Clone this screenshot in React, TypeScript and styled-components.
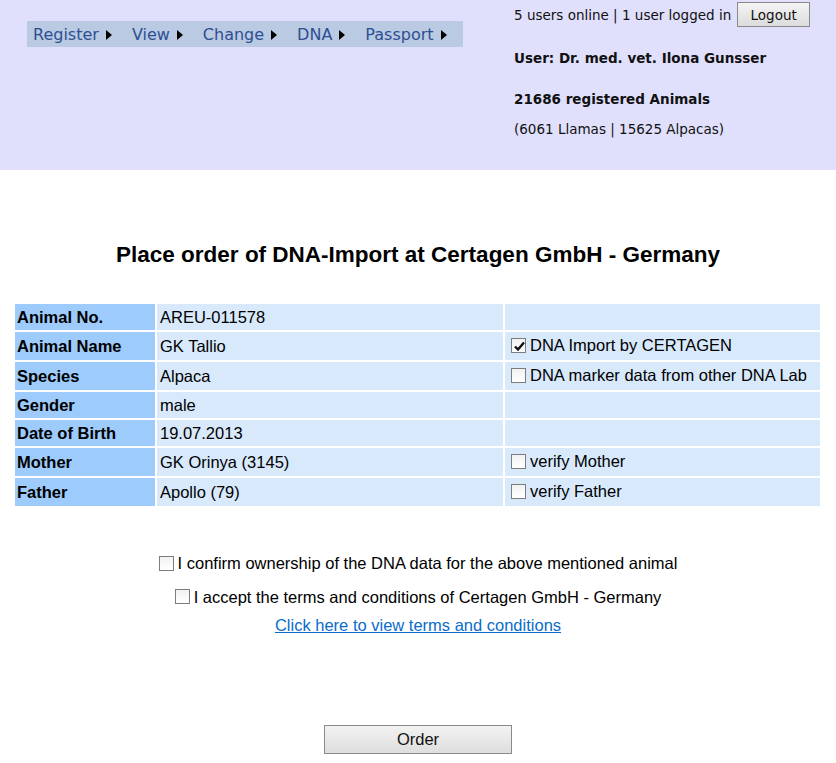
import React from "react";
import styled, { createGlobalStyle } from "styled-components";

const Global = createGlobalStyle`
  html, body { margin: 0; padding: 0; background: #ffffff; }
  body { font-family: "Liberation Sans", Arial, sans-serif; color: #000; }
`;

const Header = styled.header`
  background: #e0e0fc;
  height: 170px;
  display: flex;
  align-items: flex-start;
`;

const NavArea = styled.div`
  width: 514px;
  padding: 21px 0 0 27px;
  box-sizing: border-box;
`;

const Nav = styled.nav`
  display: flex;
  align-items: center;
  width: 436px;
  height: 26px;
  background: #b9cae2;
  box-sizing: border-box;
  padding: 1px 0 0 6px;
  gap: 20px;
`;

const NavItem = styled.a`
  font-family: "DejaVu Sans", Verdana, sans-serif;
  font-size: 16px;
  color: #2e4f92;
  text-decoration: none;
  display: flex;
  align-items: center;
  gap: 7px;
  white-space: nowrap;
`;

const Arrow = styled.span`
  display: inline-block;
  width: 0;
  height: 0;
  border-top: 5px solid transparent;
  border-bottom: 5px solid transparent;
  border-left: 6px solid #000;
`;

const Info = styled.div`
  font-family: "DejaVu Sans", Verdana, sans-serif;
  font-size: 13.5px;
  color: #111;
  display: flex;
  flex-direction: column;
  padding-top: 2px;
`;

const OnlineRow = styled.div`
  display: flex;
  align-items: center;
  gap: 6px;
`;

const LogoutButton = styled.button`
  font-family: "DejaVu Sans", Verdana, sans-serif;
  font-size: 13.5px;
  color: #111;
  width: 73px;
  height: 25px;
  border: 1px solid #8a8a8a;
  background: linear-gradient(#f4f4f4, #dcdcdc);
  padding: 0;
`;

const InfoLine = styled.div<{ $bold?: boolean; $top: number }>`
  font-weight: ${(p) => (p.$bold ? "bold" : "normal")};
  margin-top: ${(p) => p.$top}px;
  line-height: 16px;
`;

const Title = styled.h1`
  font-family: "Liberation Sans", Arial, sans-serif;
  font-size: 22.5px;
  font-weight: bold;
  text-align: center;
  margin: 72px 0 0 0;
  line-height: 26px;
`;

const Table = styled.table`
  margin: 34px 0 0 13px;
  border-collapse: separate;
  border-spacing: 2px;
  font-family: "Liberation Sans", Arial, sans-serif;
  font-size: 16.5px;
`;

const LabelCell = styled.td`
  background: #9dcbfb;
  font-weight: bold;
  width: 136px;
  padding: 0 2px;
  height: 26px;
`;

const ValueCell = styled.td`
  background: #d8e9fc;
  width: 340px;
  padding: 0 3px;
`;

const OptionCell = styled.td`
  background: #d8e9fc;
  width: 307px;
  padding: 0 2px 0 6px;
`;

const Row = styled.tr<{ $tall?: boolean }>`
  height: ${(p) => (p.$tall ? 28 : 26)}px;
`;

const Check = styled.label`
  display: inline-flex;
  align-items: center;
  gap: 4px;
  white-space: nowrap;
`;

const Box = styled.span`
  display: inline-block;
  width: 15px;
  height: 15px;
  box-sizing: border-box;
  border: 1px solid #7d7d7d;
  background: linear-gradient(#f2f2f2, #ffffff);
  position: relative;
`;

const Tick = styled.svg`
  position: absolute;
  left: 1px;
  top: 1px;
`;

const Bottom = styled.div`
  display: flex;
  flex-direction: column;
  align-items: center;
  font-family: "Liberation Sans", Arial, sans-serif;
  font-size: 16.5px;
  margin-top: 45px;
`;

const Confirm = styled.div<{ $top: number }>`
  margin-top: ${(p) => p.$top}px;
  line-height: 20px;
`;

const TermsLink = styled.a`
  color: #0a6ccb;
  text-decoration: underline;
  margin-top: 7px;
  line-height: 20px;
`;

const OrderButton = styled.button`
  font-family: "Liberation Sans", Arial, sans-serif;
  font-size: 16.5px;
  color: #111;
  width: 188px;
  height: 29px;
  border: 1px solid #8a8a8a;
  background: linear-gradient(#f2f2f2, #dedede);
  margin-top: 90px;
  padding: 0;
`;

const CheckBox: React.FC<{ checked?: boolean; label: string }> = ({ checked, label }) => (
  <Check>
    <Box>
      {checked && (
        <Tick width="13" height="13" viewBox="0 0 13 13">
          <path d="M2 6.5 L5 9.5 L11 2.5" stroke="#111" strokeWidth="2.4" fill="none" />
        </Tick>
      )}
    </Box>
    {label}
  </Check>
);

const rows: { label: string; value: string; option?: { label: string; checked?: boolean } }[] = [
  { label: "Animal No.", value: "AREU-011578" },
  { label: "Animal Name", value: "GK Tallio", option: { label: "DNA Import by CERTAGEN", checked: true } },
  { label: "Species", value: "Alpaca", option: { label: "DNA marker data from other DNA Lab" } },
  { label: "Gender", value: "male" },
  { label: "Date of Birth", value: "19.07.2013" },
  { label: "Mother", value: "GK Orinya (3145)", option: { label: "verify Mother" } },
  { label: "Father", value: "Apollo (79)", option: { label: "verify Father" } },
];

export default function App() {
  const navItems = ["Register", "View", "Change", "DNA", "Passport"];
  return (
    <>
      <Global />
      <Header>
        <NavArea>
          <Nav>
            {navItems.map((n) => (
              <NavItem key={n} href="#">
                {n}
                <Arrow />
              </NavItem>
            ))}
          </Nav>
        </NavArea>
        <Info>
          <OnlineRow>
            <span>5 users online | 1 user logged in</span>
            <LogoutButton>Logout</LogoutButton>
          </OnlineRow>
          <InfoLine $bold $top={23}>User: Dr. med. vet. Ilona Gunsser</InfoLine>
          <InfoLine $bold $top={25}>21686 registered Animals</InfoLine>
          <InfoLine $top={14}>(6061 Llamas | 15625 Alpacas)</InfoLine>
        </Info>
      </Header>
      <Title>Place order of DNA-Import at Certagen GmbH - Germany</Title>
      <Table>
        <tbody>
          {rows.map((r) => (
            <Row key={r.label} $tall={!!r.option || r.label === "Animal Name"}>
              <LabelCell>{r.label}</LabelCell>
              <ValueCell>{r.value}</ValueCell>
              <OptionCell>
                {r.option && <CheckBox checked={r.option.checked} label={r.option.label} />}
              </OptionCell>
            </Row>
          ))}
        </tbody>
      </Table>
      <Bottom>
        <Confirm $top={0}>
          <CheckBox label="I confirm ownership of the DNA data for the above mentioned animal" />
        </Confirm>
        <Confirm $top={12}>
          <CheckBox label="I accept the terms and conditions of Certagen GmbH - Germany" />
        </Confirm>
        <TermsLink href="#">Click here to view terms and conditions</TermsLink>
        <OrderButton>Order</OrderButton>
      </Bottom>
    </>
  );
}
